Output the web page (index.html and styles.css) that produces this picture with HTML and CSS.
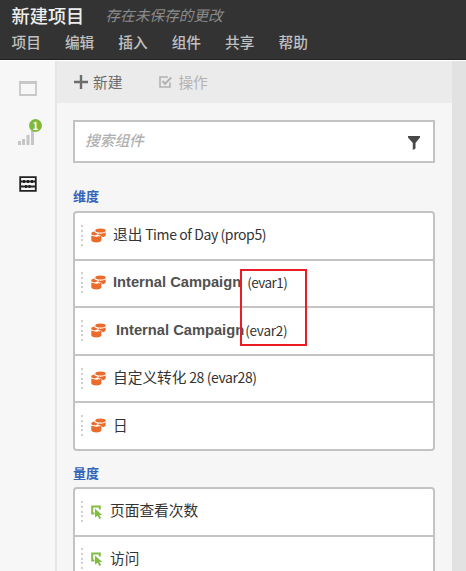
FILE: index.html
```html
<!DOCTYPE html>
<html lang="zh-CN">
<head>
<meta charset="utf-8">
<title>新建项目</title>
<link rel="stylesheet" href="styles.css">
</head>
<body>
<svg class="defs" width="0" height="0">
  <symbol id="dim" viewBox="0 0 15 15">
    <ellipse cx="9.500" cy="2.500" rx="5.200" ry="2"/>
    <path d="M.3 5.700C.3 4.500 1.600 3.800 3.400 3.600c.3 1.100 1.500 1.700 3.300 2-.4.900-1.200 1.700-2.400 1.700-2 0-4-.6-4-1.600z"/>
    <path d="M6.900 7c.5-.5.8-.9.9-1.400 3 .2 5.500-.2 6.900-1.300v3.200c-.7 1-2 1.500-3.500 1.600V8.200C10 7.800 8.500 7.300 6.900 7z"/>
    <path d="M.3 7.600c2.300 1.300 7.800 1.400 10.100.2v4.800c-.5 1.300-2.500 2-5 2s-4.600-.7-5.100-2z"/>
  </symbol>
  <symbol id="metric" viewBox="0 0 12 14">
    <path d="M3.500 8.500H1.200V1.500h7.600v3" fill="none" stroke="currentColor" stroke-width="2"/>
    <path d="M4 3.600l7.200 6.300-2.900.2 1.800 3-1.800.8-1.600-3.200L4 12.600z"/>
  </symbol>
</svg>
<header class="header">
  <div class="title-row"><h1>新建项目</h1><em>存在未保存的更改</em></div>
  <nav class="menu"><span>项目</span><span>编辑</span><span>插入</span><span>组件</span><span>共享</span><span>帮助</span></nav>
</header>
<div class="workspace">
  <aside class="rail">
    <svg class="panel-icon" width="18" height="15" viewBox="0 0 18 15"><path d="M1 1v13h16V1" fill="none" stroke="#c8c8c8" stroke-width="1.800"/><path d="M0 0h18v3H0z" fill="#c8c8c8"/></svg>
    <div class="chart">
      <svg width="17" height="18" viewBox="0 0 17 18" fill="#c6c6c6"><path d="M0 14h3v4H0zM4 12h3v6H4zM8.500 8h3v10h-3zM13 2h3v16h-3z"/></svg>
      <b class="badge">1</b>
    </div>
    <svg class="abacus" width="18" height="16" viewBox="0 0 18 16"><path d="M1.200 1.200h15.600v13.600H1.200zM1 5.500h16M1 10.500h16" fill="none" stroke="#222" stroke-width="1.800"/><path d="M4 4h2v3H4zM8 4h2v3H8zM12 4h2v3h-2zM6 9h2v3H6zM9.500 9h2v3h-2z" fill="#222"/></svg>
  </aside>
  <main class="panel">
    <div class="toolbar">
      <span class="action"><svg width="14" height="14" viewBox="0 0 14 14"><path d="M7 0v14M0 7h14" stroke="#6c6c6c" stroke-width="2.400"/></svg>新建</span>
      <span class="action disabled"><svg width="13" height="12" viewBox="0 0 13 12" fill="none" stroke="#b2b2b2"><path d="M9 1H1v10h10V6.500" stroke-width="1.600"/><path d="M3.500 5l2.500 2.800L12.300 1.500" stroke-width="2"/></svg>操作</span>
    </div>
    <div class="content">
      <div class="search"><em>搜索组件</em><svg width="12" height="14" viewBox="0 0 12 14" fill="#484848"><path d="M0 0h12v1.500L7.500 7v5.500L4.800 14V7L0 1.500z"/></svg></div>
      <h2>维度</h2>
      <ul class="list">
        <li><i class="grip"></i><svg class="dim"><use href="#dim"/></svg><span class="label">退出<span class="latin"> Time of Day (prop5)</span></span></li>
        <li><i class="grip"></i><svg class="dim"><use href="#dim"/></svg><b class="campaign">Internal Campaign</b><span class="evar">(evar1)</span><div class="highlight"></div></li>
        <li class="second"><i class="grip"></i><svg class="dim"><use href="#dim"/></svg><b class="campaign">Internal Campaign</b><span class="evar">(evar2)</span></li>
        <li><i class="grip"></i><svg class="dim"><use href="#dim"/></svg><span class="label">自定义转化<span class="latin"> 28 (evar28)</span></span></li>
        <li><i class="grip"></i><svg class="dim"><use href="#dim"/></svg><span class="label">日</span></li>
      </ul>
      <h2 class="metrics-title">量度</h2>
      <ul class="list">
        <li><i class="grip"></i><svg class="metric"><use href="#metric"/></svg><span class="label">页面查看次数</span></li>
        <li><i class="grip"></i><svg class="metric"><use href="#metric"/></svg><span class="label">访问</span></li>
      </ul>
    </div>
  </main>
  <div class="canvas"></div>
</div>
</body>
</html>
```
FILE: styles.css
```css
* { box-sizing: border-box; }
body {
  margin: 0;
  height: 571px;
  overflow: hidden;
  display: flex;
  flex-direction: column;
  background: #f6f6f6;
  color: #333;
  font: 14.7px/20px "Noto Sans CJK SC", sans-serif;
}
svg { flex: none; display: block; }
.defs { position: absolute; }
.header {
  flex: none;
  height: 60px;
  padding: 4px 11.500px 0;
  background: #333;
  border-bottom: 1px solid #222;
}
.title-row { display: flex; height: 22px; align-items: center; }
h1 { margin: 0; font-size: 18.2px; font-weight: 500; line-height: 22px; color: #eee; }
.title-row em { margin-left: 21px; color: #8b8b8b; line-height: 20px; }
.menu { display: flex; gap: 24px; margin-top: 6px; color: #c0c0c0; font-weight: 500; }
.workspace { flex: 1; min-height: 0; display: flex; border-top: 1px solid #fff; }
.rail {
  flex: none;
  width: 57px;
  padding: 20px 0 0 19px;
  border-right: 2px solid #e6e6e6;
  background: #f7f7f7;
}
.chart { position: relative; margin: 31px 0 0 -1px; padding-bottom: 31px; }
.badge {
  position: absolute;
  left: 11px;
  top: -8px;
  width: 13px;
  height: 13px;
  border-radius: 50%;
  background: #7fba3c;
  color: #fff;
  font-size: 10px;
  line-height: 13px;
  text-align: center;
}
.panel { flex: 1; min-width: 0; overflow: hidden; }
.toolbar {
  display: flex;
  align-items: center;
  gap: 37px;
  height: 42px;
  padding-left: 17px;
  background: #ebebeb;
  color: #6c6c6c;
}
.action { display: flex; align-items: center; gap: 5px; }
.action.disabled { color: #b2b2b2; gap: 6px; }
.content { padding: 17px 17px 0 16px; }
.search {
  display: flex;
  align-items: center;
  justify-content: space-between;
  height: 43px;
  padding: 0 13px 3px 10px;
  border: 2px solid #c3c3c3;
  background: #fff;
  color: #b0b0b0;
}
.search em { font-weight: 500; }
.search svg { margin-top: 5px; }
h2 { margin: 23px 0 5px; font-size: 13px; line-height: 20px; font-weight: 700; color: #3565b9; }
.metrics-title { margin: 12px 0 4px; }
.list {
  margin: 0;
  padding: 0;
  list-style: none;
  border: 2px solid #c3c3c3;
  border-radius: 4px;
  background: #fff;
}
.list li {
  position: relative;
  display: flex;
  align-items: center;
  height: 47.6px;
  padding: 0 0 2px 6px;
  border-bottom: 2px solid #c4c4c4;
}
.list li:last-child { height: 45.6px; border-bottom: 0; }
.grip {
  flex: none;
  width: 2px;
  height: 22px;
  margin-top: 2px;
  background: repeating-linear-gradient(#d0d0d0 0 2px, transparent 2px 4.800px);
}
.dim { width: 15px; height: 15px; margin: 1px 8px 0 8px; fill: #e96c2c; }
.metric { width: 12px; height: 14px; margin: 2px 7px 0 8px; color: #80bd41; fill: #80bd41; }
.label { white-space: nowrap; margin-left: -1px; margin-top: -1px; }
.metric + .label { margin-left: 0; }
.latin { font-size: 14px; letter-spacing: -0.4px; }
.campaign { font: bold 14.7px/20px "Liberation Sans", sans-serif; color: #505050; margin-left: -1px; }
.second .campaign { margin-left: 2px; }
.evar { margin-left: 6px; font-size: 13.5px; letter-spacing: -0.5px; }
.second .evar { margin-left: 1px; letter-spacing: -0.2px; }
.highlight {
  position: absolute;
  z-index: 1;
  left: 165px;
  top: 8px;
  width: 67px;
  height: 77px;
  border: 2px solid #ec1c24;
}
.canvas { flex: none; width: 14px; background: #e2e2e2; }
```
